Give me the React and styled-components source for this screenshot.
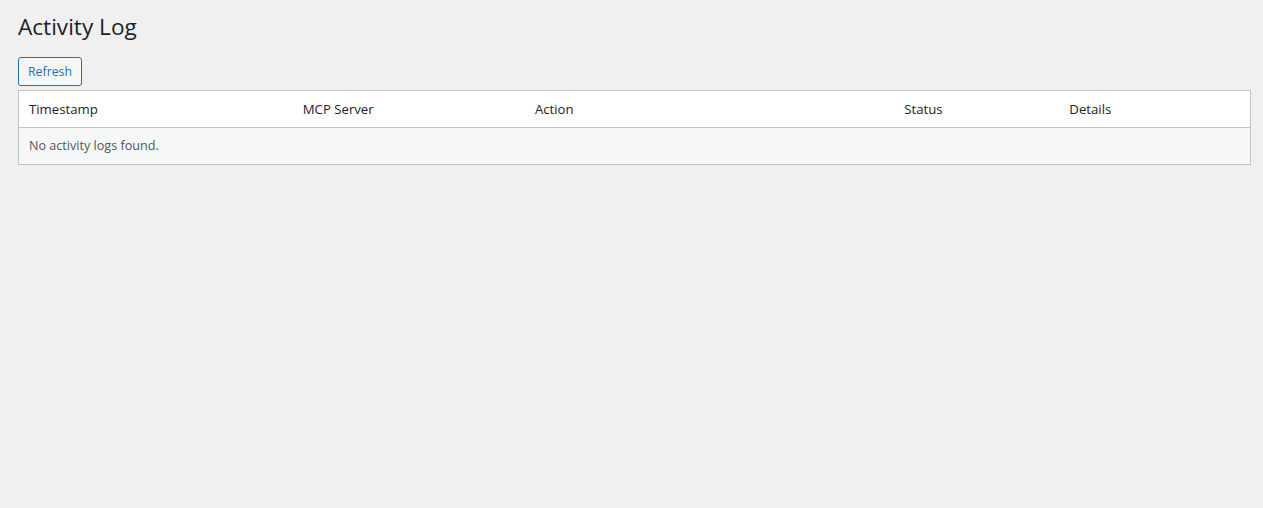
import React from 'react';
import styled, {createGlobalStyle} from 'styled-components';

const GlobalStyle = createGlobalStyle`
  html, body {
    margin: 0;
    background: #f0f0f1;
  }
  body {
    font-family: "Open Sans", "Noto Sans", sans-serif;
    color: #3c434a;
    font-size: 13px;
  }
  * {
    box-sizing: border-box;
  }
`;

const Wrap = styled.div`
  padding: 0 12px 0 18px;
`;

const Title = styled.h1`
  font-size: 22.6px;
  font-weight: 400;
  line-height: 1.3;
  margin: 0;
  padding: 12px 0 16px;
  color: #1d2327;
`;

const Button = styled.button`
  display: inline-block;
  font-family: inherit;
  font-size: 12.3px;
  line-height: 27px;
  height: 29px;
  padding: 0 9px;
  color: #2271b1;
  border: 1px solid #2271b1;
  border-radius: 3px;
  background: #f6f7f7;
  cursor: pointer;
  vertical-align: top;
`;

const Toolbar = styled.div`
  display: flex;
  margin-bottom: 4px;
`;

const Table = styled.table`
  width: 100%;
  border-collapse: collapse;
  border: 1px solid #c3c4c7;
  table-layout: fixed;
  background: #fff;
`;

const Th = styled.th`
  text-align: left;
  font-weight: 400;
  font-size: 13.2px;
  color: #1d2327;
  padding: 8px 10px;
  line-height: 20px;
  border-bottom: 1px solid #c3c4c7;
  width: ${p => p.$w}px;
`;

const EmptyCell = styled.td`
  background: #f6f7f7;
  padding: 8px 10px;
  line-height: 20px;
  color: #50575e;
  font-size: 12.6px;
`;

const columns = [
    {label: 'Timestamp', w: 274},
    {label: 'MCP Server', w: 232},
    {label: 'Action', w: 369},
    {label: 'Status', w: 165},
    {label: 'Details', w: 191},
];

function App() {
    return (
        <Wrap>
            <GlobalStyle/>
            <Title>Activity Log</Title>
            <Toolbar>
                <Button>Refresh</Button>
            </Toolbar>
            <Table>
                <thead>
                <tr>
                    {columns.map(c => <Th key={c.label} $w={c.w}>{c.label}</Th>)}
                </tr>
                </thead>
                <tbody>
                <tr>
                    <EmptyCell colSpan={columns.length}>No activity logs found.</EmptyCell>
                </tr>
                </tbody>
            </Table>
        </Wrap>
    );
}

export default App;
